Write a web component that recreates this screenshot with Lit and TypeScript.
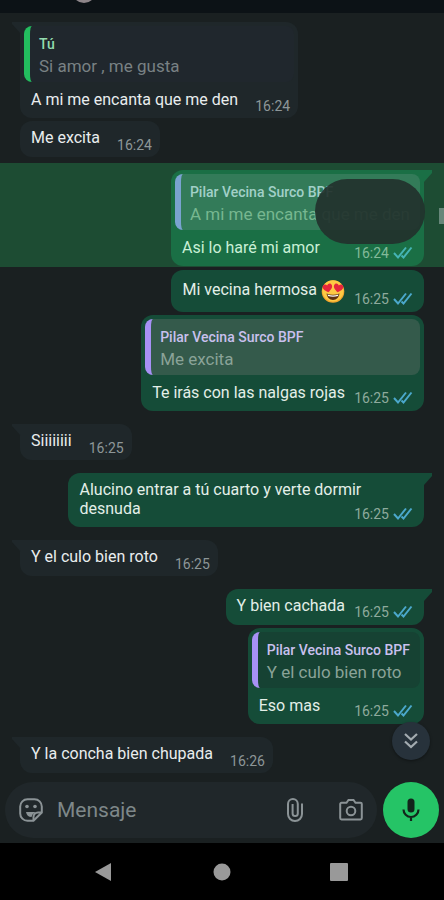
import { LitElement, html, css, svg, nothing } from "lit";
import { customElement, property } from "lit/decorators.js";
import { classMap } from "lit/directives/class-map.js";

interface Quote {
  author: string;
  text: string;
  own?: boolean;
  shade?: "light" | "dim";
}

interface Message {
  out: boolean;
  text: string;
  time: string;
  quote?: Quote;
  tail?: boolean;
  first?: boolean;
  selected?: boolean;
  emoji?: boolean;
}

const CONTACT = "Pilar Vecina Surco BPF";

const MESSAGES: Message[] = [
  { out: false, tail: true, first: true, text: "A mi me encanta que me den", time: "16:24", quote: { author: "Tú", text: "Si amor , me gusta", own: true } },
  { out: false, text: "Me excita", time: "16:24" },
  { out: true, tail: true, selected: true, text: "Asi lo haré mi amor", time: "16:24", quote: { author: CONTACT, text: "A mi me encanta que me den" } },
  { out: true, emoji: true, text: "Mi vecina hermosa", time: "16:25" },
  { out: true, text: "Te irás con las nalgas rojas", time: "16:25", quote: { author: CONTACT, text: "Me excita", shade: "light" } },
  { out: false, tail: true, first: true, text: "Siiiiiiii", time: "16:25" },
  { out: true, tail: true, first: true, text: "Alucino entrar a tú cuarto y verte dormir desnuda", time: "16:25" },
  { out: false, tail: true, first: true, text: "Y el culo bien roto", time: "16:25" },
  { out: true, tail: true, first: true, text: "Y bien cachada", time: "16:25" },
  { out: true, text: "Eso mas", time: "16:25", quote: { author: CONTACT, text: "Y el culo bien roto", shade: "dim" } },
  { out: false, tail: true, first: true, text: "Y la concha bien chupada", time: "16:26" },
];

const heart = (x: number, tilt: number) => svg`
  <path transform="translate(${x} 8.5) rotate(${tilt}) scale(1.15)" fill="#e5263c"
    d="M0 4.2C-3.4 2-4.4.4-4.1-1.3-3.8-3.4-1-3.8 0-1.7 1-3.8 3.8-3.4 4.1-1.3 4.4.4 3.4 2 0 4.2Z"/>`;

@customElement("chat-message")
export class ChatMessage extends LitElement {
  @property({ attribute: false }) message!: Message;

  static styles = css`
    :host { display: block; }
    .row { display: flex; padding: 0 20px; position: relative; }
    .row.out { justify-content: flex-end; }
    .row.selected { background: #1d4c33; padding-top: 7px; padding-bottom: 1px; }
    .bubble {
      position: relative;
      max-width: 88%;
      box-sizing: border-box;
      border-radius: 12px;
      background: #1f272a;
      color: #e9edee;
    }
    .out .bubble { background: #154c38; color: #e3efe8; }
    .selected .bubble { background: #1a6f45; color: #c9f0d6; }
    .in .tail { border-top-left-radius: 0; }
    .out .tail { border-top-right-radius: 0; }
    .tail::before {
      content: "";
      position: absolute;
      top: 0;
      width: 9px;
      height: 12px;
      background: inherit;
    }
    .in .tail::before { left: -8px; clip-path: polygon(0 0, 100% 0, 100% 100%, 0 2px); }
    .out .tail::before { right: -8px; clip-path: polygon(0 0, 100% 0, 100% 3px, 1px 100%, 0 100%); }
    .body {
      margin: 0;
      min-height: 36px;
      box-sizing: border-box;
      padding: 7px 0 9px 11px;
      font-size: 16px;
      line-height: 19px;
    }
    .wrap .body { padding-top: 8px; }
    .body.emoji { line-height: 26px; }
    .body svg { width: 24px; height: 24px; vertical-align: middle; }
    .spacer { display: inline-block; height: 1px; width: 60px; }
    .out .spacer { width: 79px; }
    .meta {
      position: absolute;
      right: 8px;
      bottom: 4px;
      display: flex;
      align-items: center;
      gap: 4px;
      font-size: 14px;
      line-height: 16px;
      color: #8d9698;
    }
    .out .meta { right: 11px; bottom: 5px; color: #8eaa9d; }
    .selected .meta { color: #83b999; }
    .meta svg { width: 20px; height: 14px; stroke: #4ba8cc; }
    .selected .meta svg { stroke: #45b4b4; }
    .wrap { padding-top: 4px; }
    .quote {
      margin: 0 4px;
      height: 56px;
      box-sizing: border-box;
      padding: 8px 10px 2px 9px;
      border-left: 6px solid #a791f5;
      border-radius: 8px;
      background: #20272d;
      overflow: hidden;
      white-space: nowrap;
    }
    .quote.own { border-left-color: #23bd5f; }
    .quote.light { background: #345a4b; }
    .quote.dim { background: #164233; }
    .selected .quote { background: #337b59; border-left-color: #7aa3d0; }
    .author { display: block; font-size: 14px; line-height: 20px; font-weight: 500; color: #c9c0ee; }
    .own .author { color: #93dbae; }
    .selected .author { color: #a2d0c8; }
    .cited { display: block; font-size: 17px; line-height: 25px; color: #798184; }
    .out .cited { color: #8aa398; }
    .selected .cited { color: #77b790; }
    .shade {
      position: absolute;
      top: 16px;
      right: 19px;
      width: 110px;
      height: 65px;
      border-radius: 33px;
      background: #22312d;
      opacity: 0.92;
    }
  `;

  render() {
    const m = this.message;
    const q = m.quote;
    return html`
      <div class=${classMap({ row: true, out: m.out, in: !m.out, selected: !!m.selected })}>
        <div class=${classMap({ bubble: true, tail: !!m.tail, wrap: !!q })}>
          ${q
            ? html`<div class=${classMap({ quote: true, own: !!q.own, light: q.shade === "light", dim: q.shade === "dim" })}>
                <span class="author">${q.author}</span>
                <span class="cited">${q.text}</span>
              </div>`
            : nothing}
          <p class=${classMap({ body: true, emoji: !!m.emoji })}>${m.text}${m.emoji ? this.emoji() : nothing}<span class="spacer"></span></p>
          <span class="meta">
            <time>${m.time}</time>
            ${m.out
              ? html`<svg viewBox="0 0 20 14" fill="none" stroke-width="2" role="img" aria-label="Leído">
                  <path d="M1 7 5 11.500 13 1.500M8.500 9.500 10.500 11.500 18.500 1.500" />
                </svg>`
              : nothing}
          </span>
        </div>
        ${m.selected ? html`<div class="shade"></div>` : nothing}
      </div>
    `;
  }

  private emoji() {
    return html` <svg viewBox="0 0 24 24" role="img" aria-label="😍">
      <circle cx="12" cy="12.500" r="11.300" fill="#f2a52c" />
      <circle cx="12" cy="11.800" r="10.600" fill="#fdc944" />
      ${heart(6.5, -10)} ${heart(17.5, 10)}
      <path d="M5.500 14.500Q12 17 18.500 14.500 17.500 21 12 21T5.500 14.500Z" fill="#5d3211" />
      <path d="M6.500 15.500Q12 17.500 17.500 15.500L17 17Q12 18.500 7 17Z" fill="#fff" />
    </svg>`;
  }
}

@customElement("app-root")
export class AppRoot extends LitElement {
  static styles = css`
    :host {
      display: flex;
      flex-direction: column;
      min-height: 100vh;
      background: #1a2021;
      font-family: Roboto, "Liberation Sans", sans-serif;
    }
    header { height: 13px; background: #0c1216; overflow: hidden; padding-left: 72px; }
    .avatar { width: 24px; height: 24px; margin-top: -21px; border-radius: 50%; background: #8d8589; }
    main { flex: 1; position: relative; padding: 9px 0; }
    .list { display: flex; flex-direction: column; gap: 3px; }
    .first { margin-top: 10px; }
    .first:first-child { margin-top: 0; }
    .picked { margin-top: 3px; }
    button { border: 0; padding: 0; background: none; display: flex; align-items: center; justify-content: center; cursor: pointer; }
    .down {
      position: absolute;
      right: 14px;
      bottom: 22px;
      width: 38px;
      height: 38px;
      border-radius: 50%;
      background: #27323b;
      box-shadow: 0 1px 3px #0006;
    }
    .handle { position: absolute; top: 195px; right: 0; width: 5px; height: 16px; background: #67877a; }
    .composer { display: flex; gap: 6px; padding: 0 5px 5px; }
    .field {
      flex: 1;
      min-width: 0;
      height: 56px;
      box-sizing: border-box;
      display: flex;
      align-items: center;
      padding: 0 14px;
      border-radius: 28px;
      background: #20272a;
    }
    .field svg { width: 24px; height: 24px; fill: none; stroke: #8b9396; stroke-width: 2; }
    .field button + button { margin-left: 32px; }
    input {
      flex: 1;
      min-width: 0;
      margin: 0 14px;
      padding: 0;
      border: 0;
      outline: 0;
      background: none;
      color: #e9edee;
      font: 21px/28px Roboto, "Liberation Sans", sans-serif;
    }
    input::placeholder { color: #7e8789; opacity: 1; }
    .mic { width: 56px; height: 56px; border-radius: 50%; background: #25c466; }
    nav { height: 57px; display: grid; grid-template-columns: repeat(3, 1fr); padding: 0 46px; background: #000; }
    nav svg { width: 20px; height: 20px; fill: #999; }
  `;

  render() {
    return html`
      <header><div class="avatar"></div></header>
      <main>
        <div class="list">
          ${MESSAGES.map(
            (m) => html`<chat-message class=${classMap({ first: !!m.first, picked: !!m.selected })} .message=${m}></chat-message>`
          )}
        </div>
        <div class="handle"></div>
        <button class="down" aria-label="Ir al final">
          <svg width="20" height="20" viewBox="0 0 20 20" fill="none" stroke="#a3abb0" stroke-width="2.200">
            <path d="m4 3 6 5.500L16 3M4 10.500l6 5.500 6-5.500" />
          </svg>
        </button>
      </main>
      <div class="composer">
        <div class="field">
          <button aria-label="Stickers">
            <svg viewBox="0 0 24 24">
              <path d="M8.500 1.200h7a7.300 7.300 0 0 1 7.300 7.300V14.500L14.500 22.800H8.500a7.300 7.300 0 0 1-7.300-7.300v-7a7.300 7.300 0 0 1 7.300-7.300Z" />
              <path d="M22.500 14.500h-3.500a4.500 4.500 0 0 0-4.500 4.500v3.500" />
              <path d="M7 14h9.500l-3 2.500-1 2.500C9.500 19 7.500 17 7 14Z" fill="#8b9396" stroke="none" />
              <circle cx="8" cy="8.500" r="1.800" fill="#8b9396" stroke="none" />
              <circle cx="16" cy="8.500" r="1.800" fill="#8b9396" stroke="none" />
            </svg>
          </button>
          <input type="text" aria-label="Mensaje" placeholder="Mensaje" />
          <button aria-label="Adjuntar">
            <svg viewBox="0 0 24 24">
              <path d="M19 5.500v10.500a7 7 0 0 1-14 0V6a4.900 4.900 0 0 1 9.800 0v9.500a2.600 2.600 0 0 1-5.200 0V6" />
            </svg>
          </button>
          <button aria-label="Cámara">
            <svg viewBox="0 0 24 24">
              <path d="M2.500 4.800h5l2-2.800h5l2 2.800h5a1.300 1.300 0 0 1 1.300 1.300v14a1.300 1.300 0 0 1-1.300 1.300h-19a1.300 1.300 0 0 1-1.300-1.300v-14a1.300 1.300 0 0 1 1.300-1.300Z" />
              <circle cx="12" cy="13" r="4.300" />
            </svg>
          </button>
        </div>
        <button class="mic" aria-label="Grabar audio">
          <svg width="24" height="24" viewBox="0 0 24 24">
            <rect x="8.500" y="0.500" width="7" height="14" rx="3.500" fill="#12251b" />
            <path d="M4.500 11.500a7.500 7.500 0 0 0 15 0M12 19v4" fill="none" stroke="#12251b" stroke-width="2.200" />
          </svg>
        </button>
      </div>
      <nav>
        <button aria-label="Atrás"><svg viewBox="0 0 20 20"><path d="M16 1v18L0 10Z" /></svg></button>
        <button aria-label="Inicio"><svg viewBox="0 0 20 20"><circle cx="10" cy="10" r="8.500" /></svg></button>
        <button aria-label="Recientes"><svg viewBox="0 0 20 20"><rect x="1" y="1" width="18" height="18" rx="1" /></svg></button>
      </nav>
    `;
  }
}
